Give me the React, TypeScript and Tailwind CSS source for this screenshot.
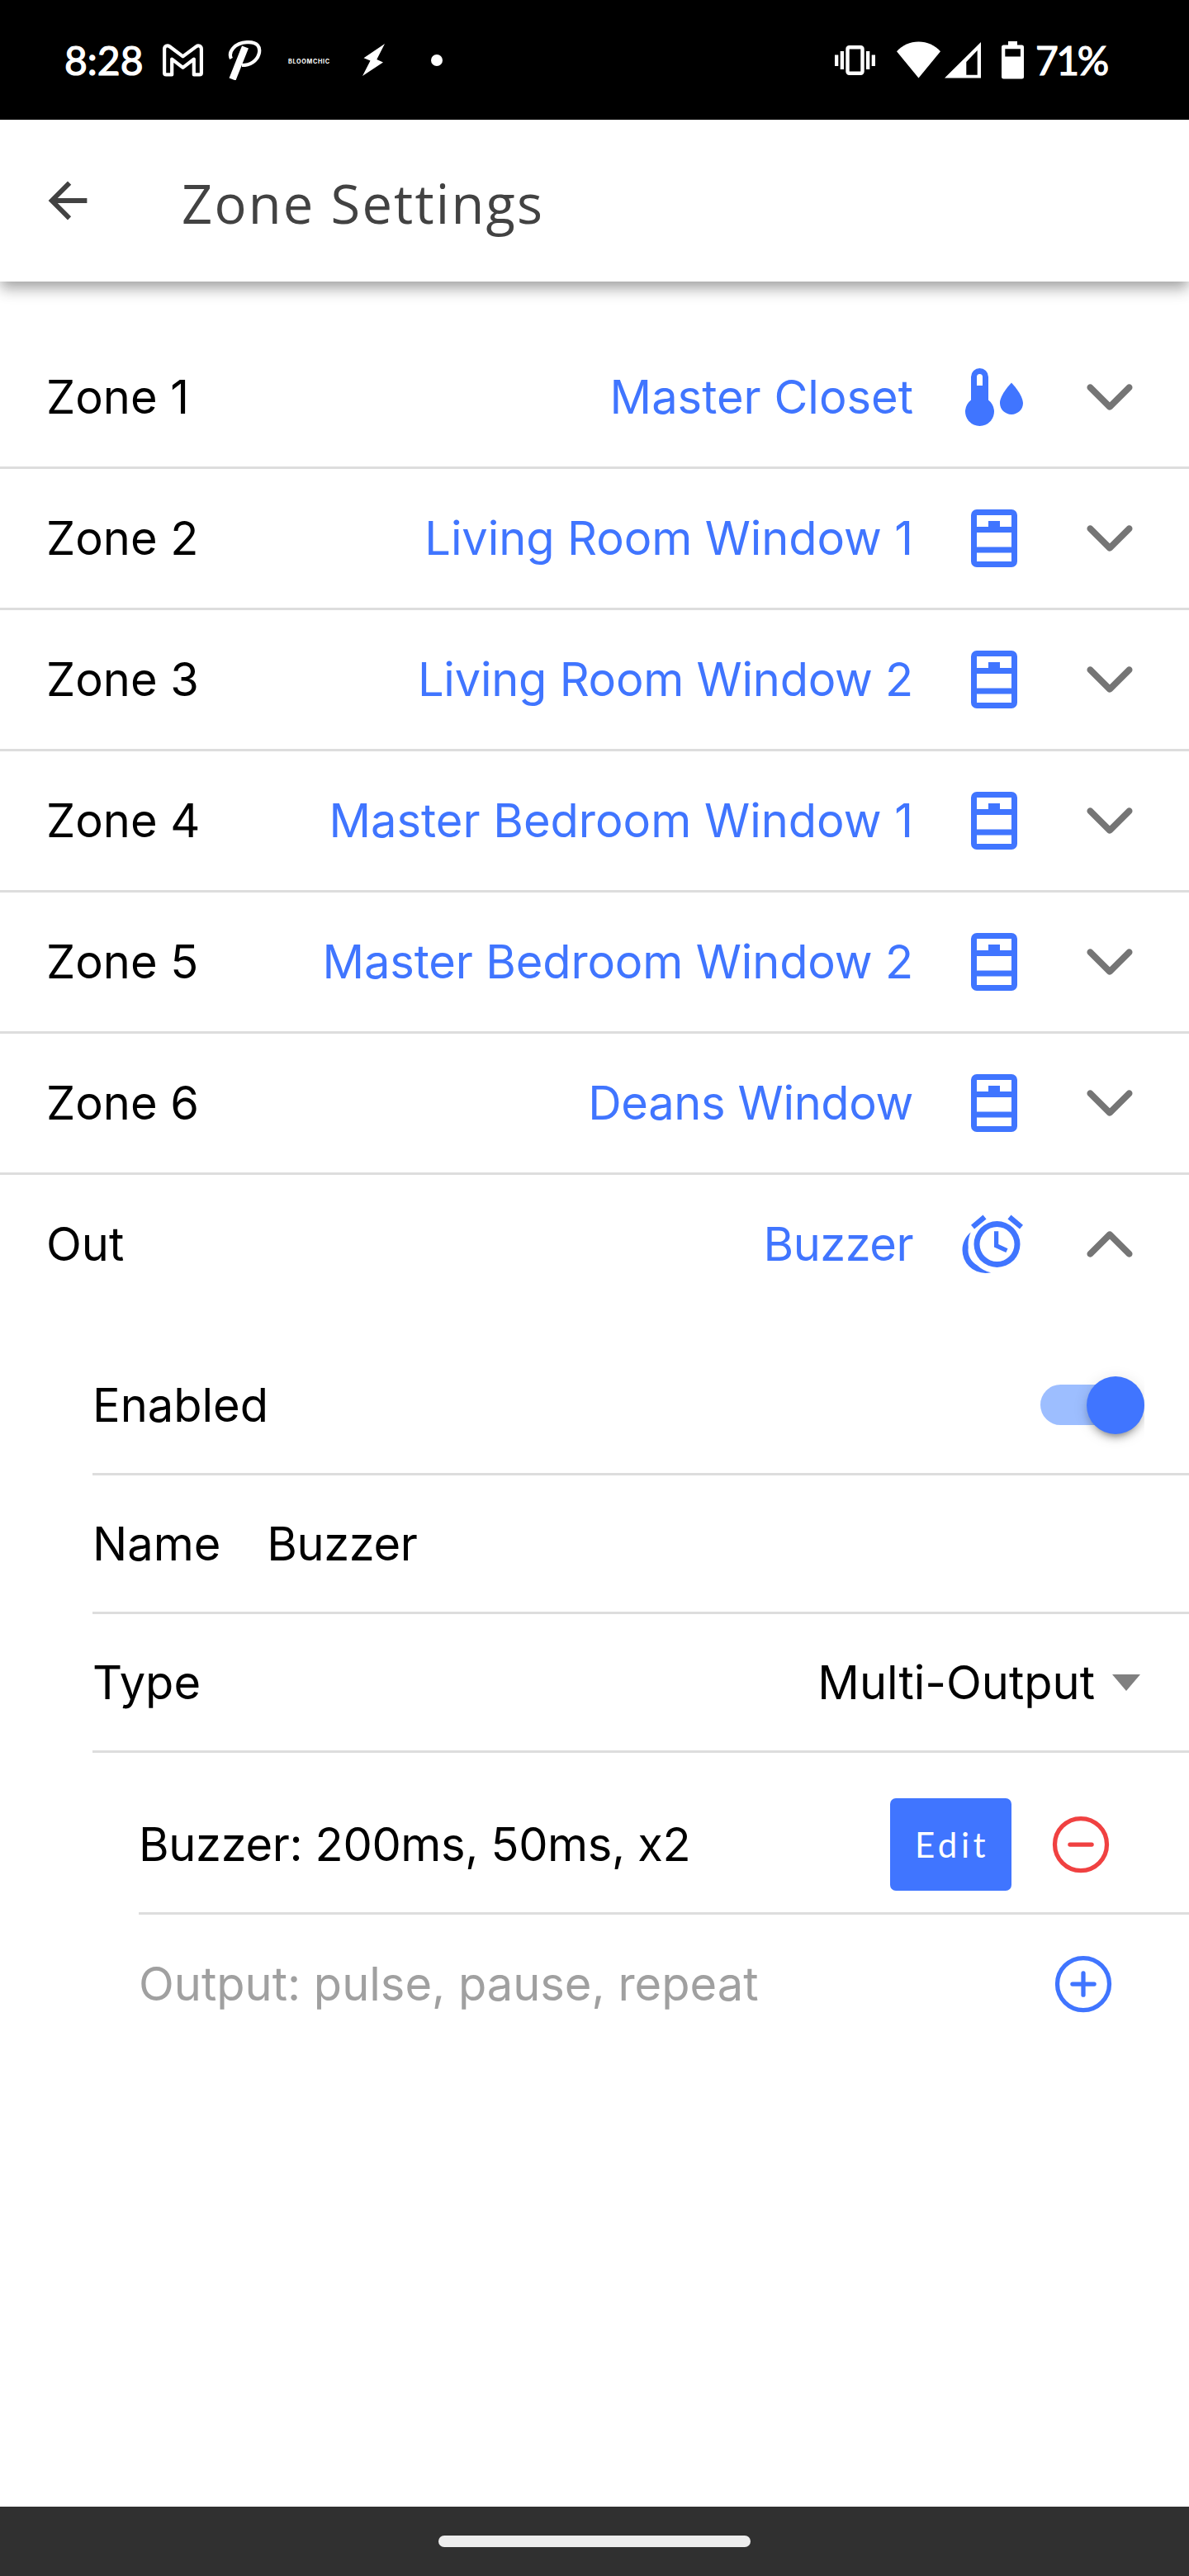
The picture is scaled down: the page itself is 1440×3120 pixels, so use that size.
import { useState } from "react";
import { IoIosArrowDown, IoIosArrowUp, IoMdArrowBack } from "react-icons/io";
import { IoAddCircleOutline, IoRemoveCircleOutline } from "react-icons/io5";

type IconName = "climate" | "window" | "alarm";

interface Zone {
  label: string;
  name: string;
  icon: IconName;
  tracking?: string;
}

const zones: Zone[] = [
  { label: "Zone 1", name: "Master Closet", icon: "climate" },
  { label: "Zone 2", name: "Living Room Window 1", icon: "window", tracking: "tracking-[-0.1px]" },
  { label: "Zone 3", name: "Living Room Window 2", icon: "window", tracking: "tracking-[-0.25px]" },
  { label: "Zone 4", name: "Master Bedroom Window 1", icon: "window" },
  { label: "Zone 5", name: "Master Bedroom Window 2", icon: "window", tracking: "tracking-[-0.15px]" },
  { label: "Zone 6", name: "Deans Window", icon: "window", tracking: "tracking-[-0.35px]" },
  { label: "Out", name: "Buzzer", icon: "alarm", tracking: "tracking-[-0.5px]" },
];

const iconPaths: Record<IconName, string> = {
  climate:
    "M7 2a3 3 0 0 1 3 3v8a5 5 0 1 1-6 0V5a3 3 0 0 1 3-3M7 4a1 1 0 0 0-1 1v3h2V5a1 1 0 0 0-1-1M18 7s4 4.1 4 7.1c0 2.2-1.8 3.9-4 3.9s-4-1.7-4-3.9C14 11.1 18 7 18 7",
  window:
    "M6 2h12a2 2 0 0 1 2 2v16a2 2 0 0 1-2 2H6a2 2 0 0 1-2-2V4a2 2 0 0 1 2-2M6 4v4h4V6h4v2h4V4zM6 10v5h12v-5zM6 17v3h12v-3z",
  alarm:
    "M9.29 3.25 5.16 6.72 4 5.34 8.14 1.87 9.29 3.25M22 5.35 20.84 6.73 16.7 3.25 17.86 1.87 22 5.35M13 4A8 8 0 0 1 21 12 8 8 0 0 1 13 20 8 8 0 0 1 5 12 8 8 0 0 1 13 4M13 6A6 6 0 0 0 7 12 6 6 0 0 0 13 18 6 6 0 0 0 19 12 6 6 0 0 0 13 6M12 7.5H13.5V12.03L16.72 13.5 16.1 14.86 12 13V7.5M1 14C1 11.5 2.13 9.3 3.91 7.83 3.33 9.1 3 10.5 3 12L3.06 13.13 3 14C3 16.28 4.27 18.26 6.14 19.28 7.44 20.5 9.07 21.39 10.89 21.78 10.28 21.92 9.65 22 9 22A8 8 0 0 1 1 14Z",
};

const ZoneIcon: React.FC<{ name: IconName }> = ({ name }) => (
  <svg width="84" height="84" viewBox="0 0 24 24" fill="#4075ff" fillRule="evenodd" className="shrink-0">
    <path d={iconPaths[name]} />
  </svg>
);

const StatusBar: React.FC = () => (
  <div className="h-[145px] shrink-0 bg-black text-white flex items-center justify-between pl-[78px] pr-[99px] font-['Lato',sans-serif]">
    <div className="flex items-center">
      <span className="w-[119px] text-[48px] leading-none [-webkit-text-stroke:1.2px_white]">8:28</span>
      {/* mail */}
      <svg width="49" height="40" viewBox="0 0 49 40" fill="none" stroke="#fff" strokeWidth="4.2" strokeLinejoin="round">
        <path d="M2.1 6.5v28.7q0 2.2 2.2 2.2h6.9V18.6l13.3 10.2 13.3-10.2v18.8h6.9q2.2 0 2.2-2.2V6.5c0-4-3.6-5.3-6.3-3.2L24.5 15.4 8.4 3.3C5.7 1.2 2.1 2.5 2.1 6.5z" />
      </svg>
      {/* script logo */}
      <svg className="ml-[29px]" width="42" height="48" viewBox="0 0 42 48" fill="none" stroke="#fff">
        <path d="M22 8 6.5 47" strokeWidth="8.5" />
        <path d="M5 22C1 14 9 3 24 2.2c13-.8 17 6 14.500 14.500C36 25 28 30 18 30" strokeWidth="4.2" />
      </svg>
      <span className="ml-[32px] w-[54px] text-[7.2px] leading-none font-bold tracking-[0.7px] mt-1 font-['Inter',sans-serif]">
        BLOOMCHIC
      </span>
      <svg className="ml-[36px]" width="27" height="39" viewBox="0 0 27 39" fill="#fff">
        <path d="M27 0 1.5 17.3 9.5 20.5 0 39 25 22.5 17.3 19z" />
      </svg>
      <span className="ml-[56px] size-3.5 rounded-full bg-white" />
    </div>
    <div className="flex items-center">
      <svg width="49" height="36" viewBox="0 0 49 36" fill="#fff">
        <path d="M0 11.5h4.3v13.4H0zM6.7 7h4.3v22H6.7zM38 7h4.3v22H38zM44.7 11.5H49v13.4h-4.3z" />
        <rect x="15.5" y="2.2" width="18" height="31.6" rx="2" fill="none" stroke="#fff" strokeWidth="4.4" />
      </svg>
      <svg className="ml-[26px]" width="53" height="45" viewBox="0 0 53 45" fill="#fff">
        <path d="M26.5 44.5 0 12.3C7 4.5 16 .5 26.5.5S46 4.5 53 12.3z" />
      </svg>
      <svg className="ml-[5px]" width="44" height="45" viewBox="0 0 44 45" fill="#fff" fillRule="evenodd">
        <path d="M0 44.5 44 1v43.5zM26.3 25v15.7h13.4V11z" />
      </svg>
      <svg className="ml-[25px]" width="27" height="46" viewBox="0 0 27 46" fill="#fff" fillRule="evenodd">
        <path d="M8 0h11v4.5h5.5A2.5 2.5 0 0 1 27 7v36a2.5 2.5 0 0 1-2.5 2.5h-22A2.5 2.5 0 0 1 0 43V7a2.5 2.5 0 0 1 2.5-2.5H8zM4.3 9.2v9.3h18.6V9.2z" />
      </svg>
      <span className="ml-[14px] w-[87px] whitespace-nowrap text-[48px] leading-none tracking-[-2.5px] [-webkit-text-stroke:1.2px_white]">
        71%
      </span>
    </div>
  </div>
);

const Header: React.FC = () => (
  <div className="relative h-[196px] shrink-0 bg-white flex items-center pl-[47px] text-[#424242] shadow-[0_7px_14px_-3px_rgba(0,0,0,0.2),0_12px_16px_0_rgba(0,0,0,0.14),0_3px_24px_0_rgba(0,0,0,0.12)]">
    <IoMdArrowBack size={70} />
    <h1 className="ml-[103px] mt-1.5 text-[65px] leading-none font-medium tracking-[2.2px] font-['Open_Sans',sans-serif]">
      Zone Settings
    </h1>
  </div>
);

const ZoneRow: React.FC<{ zone: Zone; open: boolean; onToggle: () => void }> = ({ zone, open, onToggle }) => (
  <div
    className="flex h-[171px] items-center border-b-[3px] border-[#dddddd] pl-14 pr-[54px] last-of-type:border-transparent"
    onClick={onToggle}
  >
    <span className="flex-1">{zone.label}</span>
    <span className={`mr-14 text-[#4075ff] ${zone.tracking ?? ""}`}>{zone.name}</span>
    <ZoneIcon name={zone.icon} />
    <span className="ml-14 text-[#757575]">
      {open ? <IoIosArrowUp size={84} /> : <IoIosArrowDown size={84} />}
    </span>
  </div>
);

const OutputSettings: React.FC = () => {
  const [enabled, setEnabled] = useState(true);

  return (
    <section className="mt-[25px] pl-28">
      <div className="flex h-[168px] items-center justify-between border-b-[3px] border-[#dddddd] pr-[54px]">
        <span>Enabled</span>
        <button
          className="flex h-[49px] w-[126px] items-center rounded-full bg-[#9dbeff] [clip-path:inset(-40px_0_-40px_-40px)]"
          onClick={() => setEnabled(!enabled)}
        >
          <span
            className={`size-[70px] shrink-0 rounded-full bg-[#4075ff] shadow-[0_10px_4px_-7px_rgba(0,0,0,0.2),0_7px_7px_0_rgba(0,0,0,0.14),0_3px_18px_0_rgba(0,0,0,0.12)] ${
              enabled ? "ml-14" : "ml-0"
            }`}
          />
        </button>
      </div>
      <div className="flex h-[168px] items-center gap-14 border-b-[3px] border-[#dddddd]">
        <span>Name</span>
        <span className="tracking-[-0.4px]">Buzzer</span>
      </div>
      <div className="flex h-[168px] items-center border-b-[3px] border-[#dddddd] pr-[59px]">
        <span className="flex-1">Type</span>
        <span>Multi-Output</span>
        <svg className="ml-[21px]" width="34" height="20" viewBox="0 0 34 20" fill="#808080">
          <path d="M0 0h34L17 20z" />
        </svg>
      </div>
      <div className="mt-7 pl-14">
        <div className="flex h-[168px] items-center border-b-[3px] border-[#dddddd] pr-[89px]">
          <span className="flex-1 tracking-[-0.35px]">Buzzer: 200ms, 50ms, x2</span>
          <button className="h-28 w-[147px] rounded-[7px] bg-[#4075ff] pl-[3px] text-[42px] tracking-[4.5px] text-white font-['Lato',sans-serif]">
            Edit
          </button>
          <IoRemoveCircleOutline size={84} className="ml-[42px] text-[#f04141]" />
        </div>
        <div className="flex h-[168px] items-center justify-between pr-[86px]">
          <span className="text-[#a0a0a0]">Output: pulse, pause, repeat</span>
          <IoAddCircleOutline size={84} className="text-[#4075ff]" />
        </div>
      </div>
    </section>
  );
};

const App: React.FC = () => {
  const [openZone, setOpenZone] = useState("Out");

  return (
    <div className="flex h-[3120px] w-[1440px] flex-col overflow-hidden bg-white">
      <StatusBar />
      <Header />
      <main className="flex-1 pt-14 text-[56px] leading-none text-black font-['Inter',sans-serif]">
        <div>
          {zones.map((zone) => (
            <ZoneRow
              key={zone.label}
              zone={zone}
              open={openZone === zone.label}
              onToggle={() => setOpenZone(openZone === zone.label ? "" : zone.label)}
            />
          ))}
        </div>
        {openZone === "Out" && <OutputSettings />}
      </main>
      <div className="flex h-[84px] shrink-0 items-center justify-center bg-[#303030]">
        <div className="h-3.5 w-[378px] rounded-full bg-[#ededed]" />
      </div>
    </div>
  );
};

export default App;
